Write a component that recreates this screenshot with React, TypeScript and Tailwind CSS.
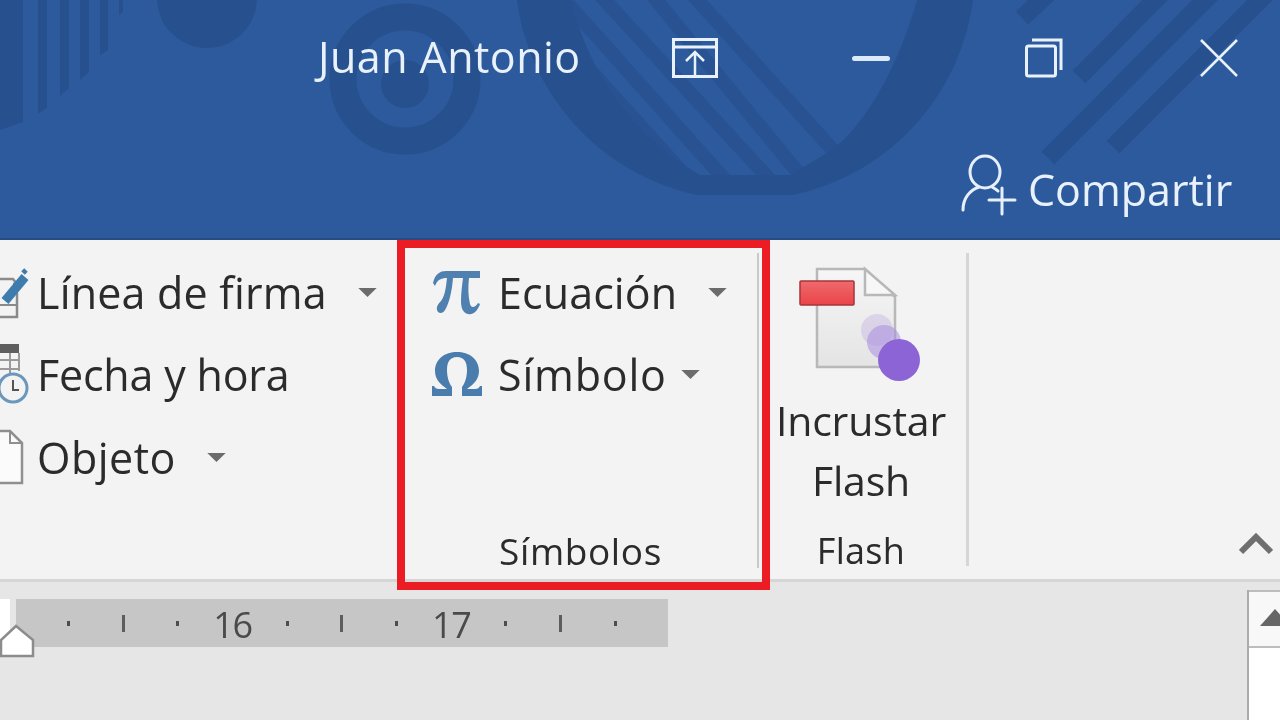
import React from "react";

const font = { fontFamily: '"Open Sans", "Noto Sans", sans-serif' };

function Caret() {
  return (
    <svg width="21" height="11" viewBox="0 0 22 12">
      <path d="M1 1h20L11 11z" fill="#6b6b6b" />
    </svg>
  );
}

function TitleDecor() {
  return (
    <svg width="1280" height="238" viewBox="0 0 1280 238" className="absolute left-0 top-0">
      <defs>
        <clipPath id="inner">
          <path d="M571 0C590 80 640 140 700 175L790 175L832 150C870 120 900 60 917 0Z" />
        </clipPath>
        <clipPath id="bowl"><rect x="0" y="0" width="1280" height="195" /></clipPath>
      </defs>
      <g fill="#27508f">
        <path d="M0 0h23v122l-23 8zM38 0h9v108l-9 6zM60 0h9v88l-9 8zM80 0h9v72l-9 8zM100 0h8v50l-8 5zM119 0h4v12l-4 3z" />
        <circle cx="207" cy="-2" r="50" />
        <circle cx="405" cy="84" r="24" />
      </g>
      <circle cx="405" cy="79" r="62" fill="none" stroke="#27508f" strokeWidth="27" />
      <g clipPath="url(#bowl)">
        <circle cx="745" cy="-30" r="230" fill="#27508f" />
      </g>
      <path d="M571 0C590 80 640 140 700 175L790 175L832 150C870 120 900 60 917 0Z" fill="#2c5a9c" />
      <g clipPath="url(#inner)" stroke="#285291" strokeWidth="14" fill="none">
        <path d="M693 -5L840 158M652 -5L800 175M600 -5L770 180M560 -5L725 180M590 70L680 170" />
      </g>
      <g stroke="#27508f" strokeWidth="18" fill="none">
        <path d="M1048 158L1215 -10M1113 147L1270 -10M1079 77L1165 -10M1022 18L1052 -10" />
      </g>
    </svg>
  );
}

function Share() {
  return (
    <svg width="56" height="62" viewBox="0 0 56 62" fill="none" stroke="#e6f0fb" strokeWidth="3" strokeLinecap="round">
      <ellipse cx="24" cy="18" rx="15" ry="16" />
      <path d="M2 56c0-12 7-20 16-23M31 33c2 1 4 2 6 4" />
      <path d="M28 46h26M41 34v26" />
    </svg>
  );
}

function FlashIcon() {
  return (
    <svg width="124" height="120" viewBox="798 263 124 120">
      <defs>
        <linearGradient id="page" x1="0" y1="0" x2="0" y2="1">
          <stop offset="0" stopColor="#f6f6f6" />
          <stop offset="1" stopColor="#e4e4e4" />
        </linearGradient>
        <linearGradient id="red" x1="0" y1="0" x2="0" y2="1">
          <stop offset="0" stopColor="#ef6a6c" />
          <stop offset="1" stopColor="#ea4449" />
        </linearGradient>
      </defs>
      <path d="M817 267h48l30 28v70h-78z" fill="url(#page)" stroke="#b8b8b8" strokeWidth="2.5" />
      <path d="M865 267v26h30z" fill="#f7f7f7" stroke="#b8b8b8" strokeWidth="2.5" />
      <rect x="800" y="279" width="54" height="24" rx="1" fill="url(#red)" stroke="#a5353a" strokeWidth="1.5" />
      <circle cx="877" cy="328" r="16" fill="#b9a5df" fillOpacity="0.35" />
      <circle cx="884" cy="340" r="17" fill="#a98ce0" fillOpacity="0.55" />
      <circle cx="899" cy="358" r="21" fill="#8d64d6" />
    </svg>
  );
}

function SignIcon() {
  return (
    <svg width="38" height="54" viewBox="0 0 38 54" fill="none">
      <path d="M0 14h13l4 5h-4M0 52h17V28" stroke="#8a8a8a" strokeWidth="2.5" />
      <path d="M0 40h17" stroke="#8a8a8a" strokeWidth="2" />
      <path d="M5 36L25 12" stroke="#3f7cae" strokeWidth="9" />
      <path d="M23 8l3-3" stroke="#3f7cae" strokeWidth="5" />
    </svg>
  );
}

function DateIcon() {
  return (
    <svg width="38" height="62" viewBox="0 0 38 62" fill="none">
      <rect x="0" y="1" width="19" height="9" fill="#5e5e5e" />
      <path d="M0 17h19M0 26h19M10 10v22M19 10v18" stroke="#9a9a9a" strokeWidth="2" />
      <circle cx="13" cy="45" r="14" fill="#f3f3f3" stroke="#6c97bd" strokeWidth="3" />
      <path d="M13 37v10h6" stroke="#555" strokeWidth="2" />
    </svg>
  );
}

function ObjectIcon() {
  return (
    <svg width="38" height="56" viewBox="0 0 38 56" fill="none">
      <path d="M0 2h10l12 12v40H0" fill="#fbfbfb" stroke="#8f8f8f" strokeWidth="2.5" />
      <path d="M10 2v12h12" stroke="#8f8f8f" strokeWidth="2" />
    </svg>
  );
}

function RulerCell({ kind }: { kind: string }) {
  return (
    <div className="flex w-[54.7px] items-center justify-center">
      {kind === "dot" && <div className="h-[5px] w-[3px] bg-[#4d4d4d]" />}
      {kind === "line" && <div className="h-[17px] w-[3px] bg-[#5d5d5d]" />}
      {kind !== "dot" && kind !== "line" && (
        <span className="mt-[4px] text-[36px] font-medium leading-none tracking-[-1.5px] text-[#4a4a4a]">{kind}</span>
      )}
    </div>
  );
}

export default function App() {
  const rulerCells = ["dot", "line", "dot", "16", "dot", "line", "dot", "17", "dot", "line", "dot"];
  return (
    <div style={font} className="flex h-[720px] w-[1280px] flex-col overflow-hidden bg-[#e6e6e6] blur-[0.6px]">
      {/* title bar */}
      <header className="relative h-[240px] shrink-0 border-b-2 border-[#264b85] bg-[#2c5a9c] text-[#e9f2fc]">
        <TitleDecor />
        <div className="relative flex h-[116px] items-center pl-[318px]">
          <span className="-mt-[4px] w-[354px] text-[43px] font-medium leading-none tracking-[0.45px]">Juan Antonio</span>
          <svg width="46" height="40" viewBox="0 0 46 40" fill="none" stroke="#e9f2fc" strokeWidth="3">
            <rect x="1.5" y="1.5" width="43" height="37" />
            <path d="M1.5 9h43" />
            <path d="M23 38V15M14 23l9-9 9 9" strokeWidth="2.5" />
          </svg>
          <div className="ml-[134px] h-[5px] w-[38px] rounded-sm bg-[#dce9f8]" />
          <svg width="38" height="40" viewBox="0 0 38 40" fill="none" stroke="#e9f2fc" strokeWidth="3" className="ml-[135px]">
            <rect x="1.5" y="8" width="29" height="30" rx="2" />
            <path d="M7 2h29v30" />
          </svg>
          <svg width="38" height="38" viewBox="0 0 38 38" stroke="#e9f2fc" strokeWidth="2.5" className="ml-[137px]">
            <path d="M1 1l36 36M37 1L1 37" />
          </svg>
        </div>
        <div className="relative flex items-center pl-[961px] pt-[38px]">
          <Share />
          <span className="ml-[11px] mt-[8px] text-[43px] font-medium leading-none">Compartir</span>
        </div>
      </header>

      {/* ribbon */}
      <section className="flex h-[342px] shrink-0 border-b-[3px] border-[#d6d6d6] bg-[#f3f3f3] text-[#2b2b2b]">
        <div className="flex w-[397px] shrink-0 flex-col pt-[11px] text-[43px] font-medium leading-none">
          <div className="flex h-[82px] items-center">
            <div className="w-[37px] shrink-0"><SignIcon /></div>
            <span className="w-[320px] tracking-[0.2px]">Línea de firma</span>
            <Caret />
          </div>
          <div className="flex h-[82px] items-center">
            <div className="w-[37px] shrink-0"><DateIcon /></div>
            <span className="tracking-[-0.2px]">Fecha y hora</span>
          </div>
          <div className="flex h-[84px] items-center">
            <div className="w-[37px] shrink-0"><ObjectIcon /></div>
            <span className="w-[169px] tracking-[0.5px]">Objeto</span>
            <Caret />
          </div>
        </div>

        <div className="relative z-10 flex h-[350px] w-[373px] shrink-0 flex-col border-8 border-[#ec1c24] pl-[27px] pt-[3px]">
          <div className="flex h-[82px] items-center text-[43px] font-medium leading-none">
            <svg width="50" height="46" viewBox="0 0 50 46" className="shrink-0">
              <path d="M1 14C3 5 8 2 14 2h34v7H37c-1 9-1 18 1 26 1 4 5 4 8-1l2 1c-3 8-7 11-12 10-5-1-7-6-7-13 0-8 1-15 2-23H21c-1 13-4 26-8 32-2 4-7 4-8 0-1-3 1-6 4-9 4-5 5-14 6-23-6 0-10 2-12 8z" fill="#4f80b0" />
            </svg>
            <span className="ml-[16px] w-[209px] tracking-[0.1px]">Ecuación</span>
            <Caret />
          </div>
          <div className="flex h-[82px] items-center text-[43px] font-medium leading-none">
            <svg width="50" height="46" viewBox="0 0 50 46" className="shrink-0">
              <path d="M0 45V35h2c1 2 2 3 5 3h8c-7-5-12-10-12-18C3 8 13 1 25 1s22 7 22 19c0 8-5 13-12 18h8c3 0 4-1 5-3h2v10H30v-9c3-4 5-10 5-17 0-8-3-13-10-13s-10 5-10 13c0 7 2 13 5 17v9z" fill="#4a7dae" />
            </svg>
            <span className="ml-[16px] w-[182px] tracking-[0.8px]">Símbolo</span>
            <Caret />
          </div>
          <div className="-ml-[27px] mt-auto mb-[9px] flex h-[46px] w-[351px] items-center justify-center text-[37px] font-medium leading-none tracking-[0.6px]">
            Símbolos
          </div>
          <div className="absolute bottom-[14px] right-[3px] top-[5px] w-[2px] bg-[#c9c9c9]" />
        </div>

        <div className="my-[13px] flex w-[199px] shrink-0 flex-col items-center border-r-[3px] border-[#d6d6d6] pr-[14px]">
          <div className="mt-[12px] h-[120px] w-[124px] shrink-0 -translate-x-[1px]">
            <FlashIcon />
          </div>
          <div className="mt-[5px] text-center text-[41px] font-medium leading-[60px] tracking-[-0.2px]">
            Incrustar
            <br />
            Flash
          </div>
          <div className="mt-auto -mb-[3px] text-[36px] font-medium leading-none tracking-[0.3px]">Flash</div>
        </div>

        <div className="flex flex-1 items-end justify-end pb-[24px] pr-[7px]">
          <svg width="34" height="22" viewBox="0 0 34 22" fill="none" stroke="#6f6f6f" strokeWidth="6">
            <path d="M2 19L17 4l15 15" />
          </svg>
        </div>
      </section>

      {/* ruler */}
      <section className="flex min-h-0 flex-1 pt-[17px]">
        <div className="flex h-[48px] w-[668px] shrink-0">
          <div className="relative h-[50px] w-[16px] shrink-0">
            <div className="h-[50px] w-[10px] bg-white" />
            <svg width="36" height="34" viewBox="0 0 36 34" className="absolute left-0 top-[25px]" fill="#fff" stroke="#8c8c8c" strokeWidth="2.5">
              <path d="M1 32V16L16 2l17 14v16z" />
            </svg>
          </div>
          <div className="flex flex-1 items-center bg-[#c6c6c6] pl-[25px]">
            {rulerCells.map((k, i) => (
              <RulerCell key={i} kind={k} />
            ))}
          </div>
        </div>
        <div className="-mt-[9px] ml-auto flex w-[33px] flex-col border-l-2 border-[#ababab] bg-white">
          <div className="flex h-[58px] items-center justify-end overflow-hidden border-y-2 border-[#bdbdbd] bg-[#f8f8f8]">
            <svg width="20" height="17" viewBox="0 0 20 17" className="-mt-[4px]">
              <path d="M0 17L15 0l5 5.6V17z" fill="#666" />
            </svg>
          </div>
          <div className="flex-1 bg-white" />
        </div>
      </section>
    </div>
  );
}
